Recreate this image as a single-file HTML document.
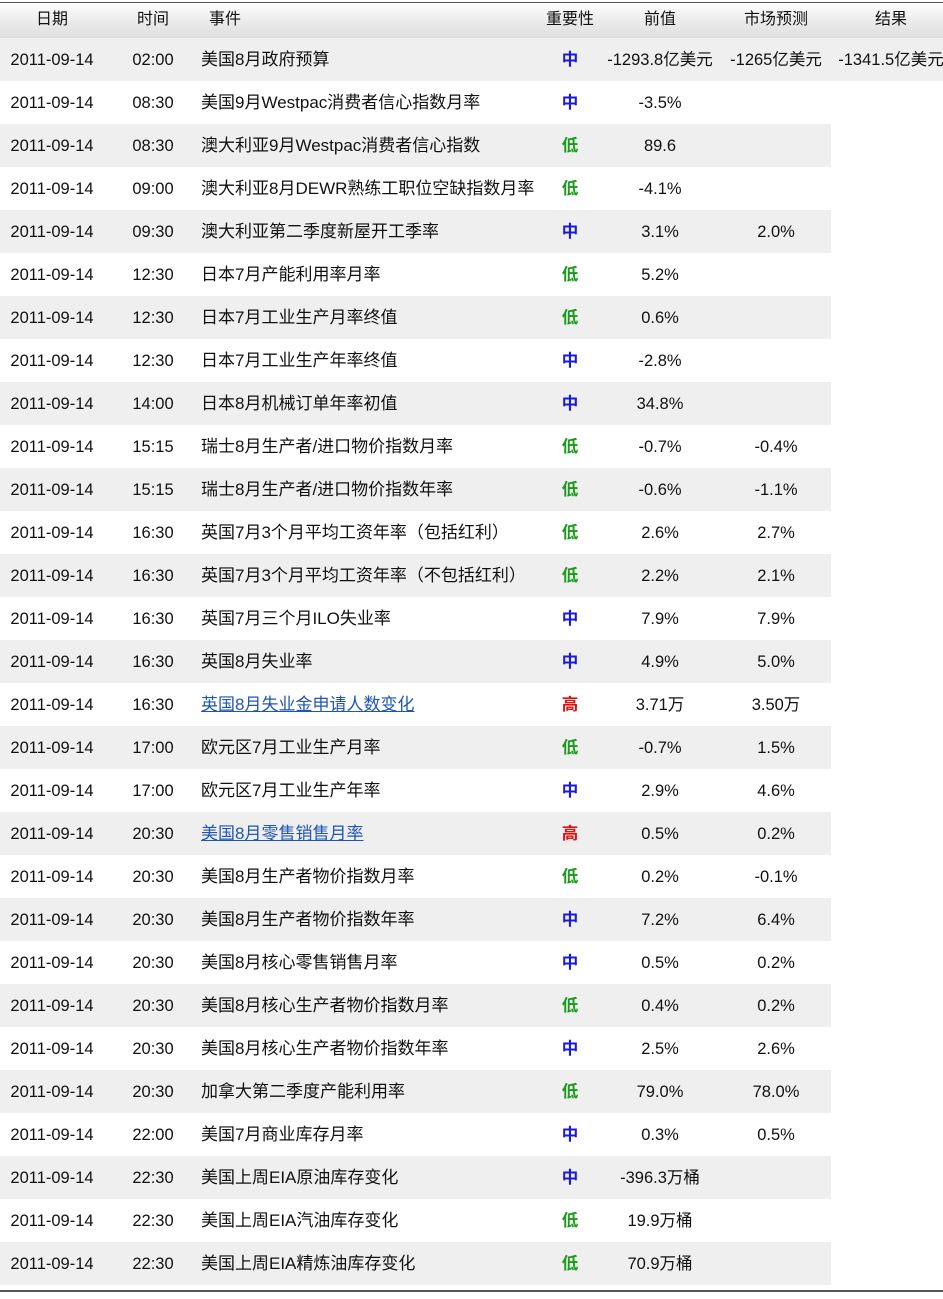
<!DOCTYPE html>
<html><head><meta charset="utf-8"><style>
body{margin:0;width:943px;height:1299px;background:#fff;font-family:"Liberation Sans","Noto Sans CJK SC",sans-serif;position:relative;overflow:hidden;color:#111}
.hd{position:absolute;left:0;top:2px;width:943px;height:35px;border-top:1px solid #555;background:linear-gradient(#fdfdfd,#e9e9e9 60%,#dedede);font-size:16px}
.hd span{position:absolute;top:0;line-height:34px;transform:translateX(-50%)}
.r{position:absolute;left:0;width:831px;height:43px;font-size:16.5px}
.r.g{background:#efefef}
.r span{position:absolute;top:0;line-height:44px;white-space:nowrap}
.r span.e{font-size:17px}
.c{transform:translateX(-50%)}
.m{color:#1a1adf;font-weight:bold}.l{color:#1a9a1a;font-weight:bold}.h{color:#e01010;font-weight:bold}
a{color:#1f55b5;text-decoration:underline}
.bot{position:absolute;left:0;top:1290px;width:943px;height:2px;background:#555}
</style></head><body>
<div class="hd"><span style="left:52px">日期</span><span style="left:153px">时间</span><span style="left:225px">事件</span><span style="left:570px">重要性</span><span style="left:660px">前值</span><span style="left:776px">市场预测</span><span style="left:891px">结果</span></div>
<div id="t"></div>
<div class="bot"></div>
<script>
var d=[
["02:00","美国8月政府预算","m","-1293.8亿美元","-1265亿美元","-1341.5亿美元"],
["08:30","美国9月Westpac消费者信心指数月率","m","-3.5%","",""],
["08:30","澳大利亚9月Westpac消费者信心指数","l","89.6","",""],
["09:00","澳大利亚8月DEWR熟练工职位空缺指数月率","l","-4.1%","",""],
["09:30","澳大利亚第二季度新屋开工季率","m","3.1%","2.0%",""],
["12:30","日本7月产能利用率月率","l","5.2%","",""],
["12:30","日本7月工业生产月率终值","l","0.6%","",""],
["12:30","日本7月工业生产年率终值","m","-2.8%","",""],
["14:00","日本8月机械订单年率初值","m","34.8%","",""],
["15:15","瑞士8月生产者/进口物价指数月率","l","-0.7%","-0.4%",""],
["15:15","瑞士8月生产者/进口物价指数年率","l","-0.6%","-1.1%",""],
["16:30","英国7月3个月平均工资年率（包括红利）","l","2.6%","2.7%",""],
["16:30","英国7月3个月平均工资年率（不包括红利）","l","2.2%","2.1%",""],
["16:30","英国7月三个月ILO失业率","m","7.9%","7.9%",""],
["16:30","英国8月失业率","m","4.9%","5.0%",""],
["16:30","<a>英国8月失业金申请人数变化</a>","h","3.71万","3.50万",""],
["17:00","欧元区7月工业生产月率","l","-0.7%","1.5%",""],
["17:00","欧元区7月工业生产年率","m","2.9%","4.6%",""],
["20:30","<a>美国8月零售销售月率</a>","h","0.5%","0.2%",""],
["20:30","美国8月生产者物价指数月率","l","0.2%","-0.1%",""],
["20:30","美国8月生产者物价指数年率","m","7.2%","6.4%",""],
["20:30","美国8月核心零售销售月率","m","0.5%","0.2%",""],
["20:30","美国8月核心生产者物价指数月率","l","0.4%","0.2%",""],
["20:30","美国8月核心生产者物价指数年率","m","2.5%","2.6%",""],
["20:30","加拿大第二季度产能利用率","l","79.0%","78.0%",""],
["22:00","美国7月商业库存月率","m","0.3%","0.5%",""],
["22:30","美国上周EIA原油库存变化","m","-396.3万桶","",""],
["22:30","美国上周EIA汽油库存变化","l","19.9万桶","",""],
["22:30","美国上周EIA精炼油库存变化","l","70.9万桶","",""]];
var w={m:"中",l:"低",h:"高"},h="";
d.forEach(function(r,i){var y=38+43*i;
h+='<div class="r'+(i%2==0?' g':'')+'" style="top:'+y+'px;'+(i==0?'width:943px':'')+'">'+
'<span class="c" style="left:52px">2011-09-14</span><span class="c" style="left:153px">'+r[0]+'</span>'+
'<span class="e" style="left:201px">'+r[1]+'</span><span class="c '+r[2]+'" style="left:570px">'+w[r[2]]+'</span>'+
'<span class="c" style="left:660px">'+r[3]+'</span><span class="c" style="left:776px">'+r[4]+'</span>'+
'<span class="c" style="left:891px">'+r[5]+'</span></div>';});
document.getElementById("t").innerHTML=h;
</script>
</body></html>
